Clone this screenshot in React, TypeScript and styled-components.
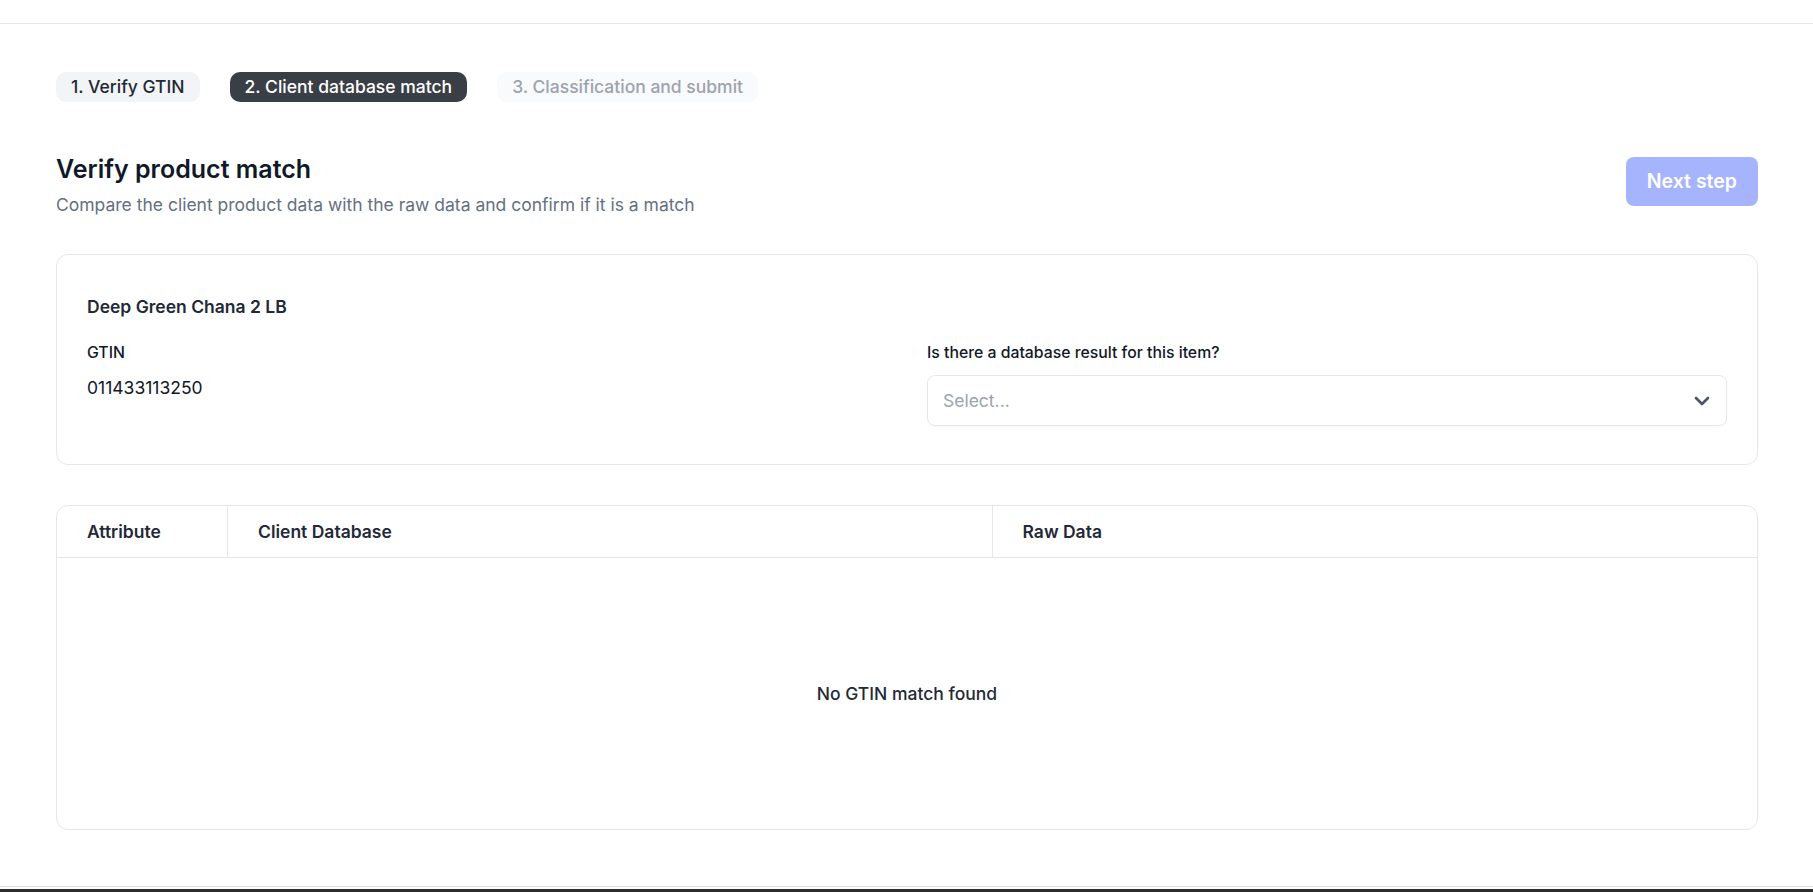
import styled, { createGlobalStyle } from "styled-components";

const GlobalStyles = createGlobalStyle`
	* {
		box-sizing: border-box;
	}
	body {
		margin: 0;
		background: #fff;
		font-family: Inter, "Noto Sans", "Liberation Sans", sans-serif;
		color: #111827;
	}
`;

const Page = styled.div`
	display: flex;
	flex-direction: column;
	height: 100vh;
`;

const TopBar = styled.header`
	height: 24px;
	flex-shrink: 0;
	display: flex;
	justify-content: center;
	overflow: hidden;
	border-bottom: 1px solid #e5e7eb;
`;

const TopBarText = styled.span`
	margin-top: -14px;
	margin-left: 60px;
	font-size: 14px;
	line-height: 18px;
	color: #d1d5db;
`;

const Main = styled.main`
	flex: 1;
	padding: 48px 55px 0 56px;
`;

const Steps = styled.nav`
	display: flex;
	gap: 30px;
`;

const Step = styled.span<{ $state: "done" | "active" | "todo" }>`
	display: inline-block;
	padding: 4px 15px;
	border-radius: 10px;
	font-size: 17.5px;
	line-height: 22px;
	font-weight: 500;
	background: ${p =>
		p.$state === "active" ? "#3a3f47" : p.$state === "done" ? "#f3f4f6" : "#f9fafb"};
	color: ${p =>
		p.$state === "active" ? "#fff" : p.$state === "done" ? "#1f2937" : "#9ca3af"};
`;

const Header = styled.div`
	display: flex;
	justify-content: space-between;
	align-items: flex-start;
	margin-top: 51px;
`;

const Title = styled.h1`
	margin: 0;
	font-size: 25px;
	line-height: 32px;
	font-weight: 600;
	color: #111827;
`;

const Subtitle = styled.p`
	margin: 8px 0 0;
	font-size: 17.5px;
	line-height: 24px;
	color: #64707f;
`;

const NextButton = styled.button`
	margin-top: 4px;
	padding: 12px 21px;
	border: none;
	border-radius: 8px;
	background: #a5b4fc;
	color: #fff;
	font-family: inherit;
	font-size: 19.5px;
	line-height: 25px;
	font-weight: 600;
	cursor: not-allowed;
`;

const Card = styled.section<{ $gap?: number }>`
	margin-top: ${p => p.$gap ?? 40}px;
	border: 1px solid #e5e7eb;
	border-radius: 12px;
	background: #fff;
	overflow: hidden;
`;

const ProductCard = styled(Card)`
	padding: 40px 30px 38px;
`;

const ProductName = styled.h2`
	margin: 0;
	font-size: 17.5px;
	line-height: 24px;
	font-weight: 600;
	color: #1f2937;
`;

const FieldGrid = styled.div`
	display: grid;
	grid-template-columns: 1fr 1fr;
	gap: 40px;
	margin-top: 24px;
`;

const Field = styled.div<{ $gap: number }>`
	display: flex;
	flex-direction: column;
	gap: ${p => p.$gap}px;
`;

const Label = styled.label`
	font-size: 15.8px;
	line-height: 20px;
	font-weight: 500;
	color: #111827;
`;

const Value = styled.div`
	font-size: 17.5px;
	line-height: 24px;
	color: #111827;
`;

const SelectBox = styled.div`
	height: 51px;
	display: flex;
	align-items: center;
	justify-content: space-between;
	padding: 0 16px 0 15px;
	border: 1px solid #e5e7eb;
	border-radius: 8px;
	box-shadow: 0 1px 2px rgba(0, 0, 0, 0.03);
	font-size: 17.5px;
	color: #9ca3af;
`;

const Table = styled.div`
	display: grid;
	grid-template-columns: 171px 1fr 1fr;
`;

const HeadCell = styled.div<{ $last?: boolean }>`
	padding: 14px 30px;
	font-size: 17.5px;
	line-height: 23px;
	font-weight: 600;
	color: #1f2937;
	border-bottom: 1px solid #e5e7eb;
	border-right: ${p => (p.$last ? "none" : "1px solid #e5e7eb")};
`;

const EmptyRow = styled.div`
	grid-column: 1 / -1;
	height: 271px;
	display: flex;
	align-items: center;
	justify-content: center;
	font-size: 17.5px;
	font-weight: 500;
	color: #1f2937;
`;

const BottomEdge = styled.footer`
	flex-shrink: 0;
	height: 6px;
	border-top: 1px solid #dcdcdc;
	border-bottom: 3px solid #2e2e2e;
`;

function Chevron() {
	return (
		<svg width="16" height="10" viewBox="0 0 16 10" fill="none">
			<path
				d="M2 2l6 6 6-6"
				stroke="#4b5563"
				strokeWidth="2.6"
				strokeLinecap="round"
				strokeLinejoin="round"
			/>
		</svg>
	);
}

function App() {
	return (
		<>
			<GlobalStyles />
			<Page>
				<TopBar>
					<TopBarText>Product review</TopBarText>
				</TopBar>
				<Main>
					<Steps>
						<Step $state="done">1. Verify GTIN</Step>
						<Step $state="active">2. Client database match</Step>
						<Step $state="todo">3. Classification and submit</Step>
					</Steps>

					<Header>
						<div>
							<Title>Verify product match</Title>
							<Subtitle>
								Compare the client product data with the raw data and confirm if it is a match
							</Subtitle>
						</div>
						<NextButton disabled>Next step</NextButton>
					</Header>

					<ProductCard $gap={37}>
						<ProductName>Deep Green Chana 2 LB</ProductName>
						<FieldGrid>
							<Field $gap={13}>
								<Label>GTIN</Label>
								<Value>011433113250</Value>
							</Field>
							<Field $gap={12}>
								<Label>Is there a database result for this item?</Label>
								<SelectBox>
									<span>Select...</span>
									<Chevron />
								</SelectBox>
							</Field>
						</FieldGrid>
					</ProductCard>

					<Card>
						<Table>
							<HeadCell>Attribute</HeadCell>
							<HeadCell>Client Database</HeadCell>
							<HeadCell $last>Raw Data</HeadCell>
							<EmptyRow>No GTIN match found</EmptyRow>
						</Table>
					</Card>
				</Main>
				<BottomEdge />
			</Page>
		</>
	);
}

export default App;
